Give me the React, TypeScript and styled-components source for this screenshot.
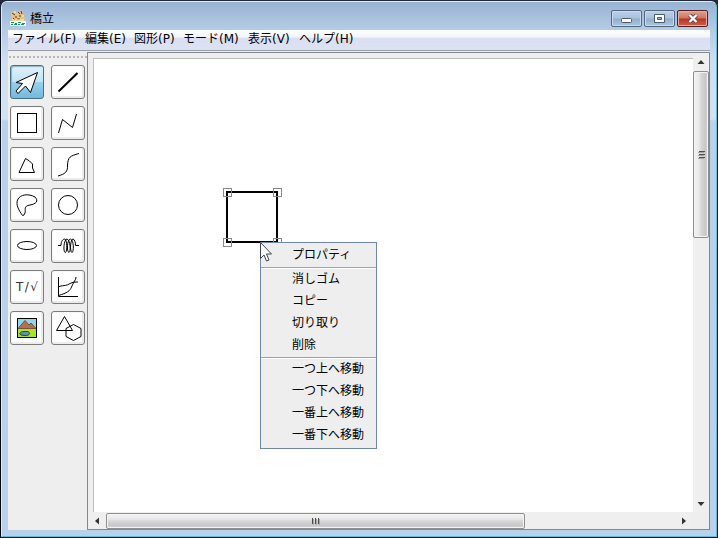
import React from "react";
import styled, { createGlobalStyle, css } from "styled-components";

const GlobalStyle = createGlobalStyle`
  *, *::before, *::after { box-sizing: border-box; }
  body { margin: 0; background: #05080c; overflow: hidden; }
  svg { display: block; }
`;

const Desktop = styled.div`
  width: 718px;
  height: 538px;
  padding: 1px;
  background: linear-gradient(180deg, #23283c 0, #0b1020 40px, #05080c 100%);
  font: 12px/22px "DejaVu Sans", "Noto Sans CJK JP", sans-serif;
  color: #000;
`;

const Window = styled.div`
  width: 716px;
  height: 536px;
  display: flex;
  flex-direction: column;
  padding: 0 6px 6px 6px;
  border: 1px solid;
  border-color: #e4edf6 #4cc6e0 #4cc6e0 #dfe9f4;
  border-radius: 6px 6px 0 0;
  background: linear-gradient(180deg, #98b4d3 0, #b3cbe5 28px, #cfdff0 60px, #d3e2f3 117px, #b9d1ea 119px, #b9d1ea 100%);
`;

const TitleBar = styled.div`
  height: 28px;
  flex: none;
  display: flex;
  align-items: flex-start;
  margin: 0 -6px;
  padding: 0 6px;
  border-radius: 5px 5px 0 0;
  background: linear-gradient(180deg, #98b3d2, #b4cde6);
`;

const AppIcon = styled.svg`
  margin: 8px 0 0 2px;
  flex: none;
`;

const Title = styled.div`
  flex: 1;
  margin: 6px 0 0 4px;
`;

const WindowButton = styled.button<{ $close?: boolean }>`
  width: 31px;
  height: 17px;
  margin: 8px 0 0 2px;
  padding: 0;
  display: grid;
  place-items: center;
  border: 1px solid ${p => (p.$close ? "#541e24" : "#53657f")};
  border-radius: 2px;
  background: ${p =>
    p.$close
      ? "linear-gradient(180deg, #dfa093 0, #cf7564 48%, #b93520 52%, #cf6249 100%)"
      : "linear-gradient(180deg, #bdd0e6 0, #a9c1dc 48%, #90adcd 52%, #a9c5e0 100%)"};
  box-shadow: inset 0 0 0 1px ${p => (p.$close ? "#e5aea5" : "#c9daed")};
`;

const ControlGroup = styled.div`
  display: flex;
  margin-right: 2px;
`;

const MenuBar = styled.nav`
  height: 21px;
  flex: none;
  display: flex;
  padding-left: 4px;
  line-height: 19px;
  border-bottom: 1px solid #9a9da6;
  background: linear-gradient(180deg, #fff 0, #f3f5fb 35%, #d9dff1 42%, #dde2f3 100%);
`;

const MenuItem = styled.span<{ $width: number }>`
  width: ${p => p.$width}px;
  white-space: nowrap;
`;

const Client = styled.div`
  flex: 1;
  min-height: 0;
  display: flex;
  padding-top: 1px;
  background: #eee;
`;

const ToolBar = styled.aside`
  width: 79px;
  flex: none;
  padding: 4px 0 0 1px;
`;

const Grip = styled.div`
  height: 3px;
  margin-bottom: 6px;
  background:
    radial-gradient(circle at 1px 1px, #b9b9b9 0 0.9px, transparent 1px) 0 0 / 4px 3px repeat-x;
`;

const ToolGrid = styled.div`
  display: grid;
  grid-template-columns: 34px 34px;
  grid-auto-rows: 34px;
  gap: 7px;
  padding-left: 1px;
`;

const ToolButton = styled.button<{ $active?: boolean }>`
  padding: 0;
  display: grid;
  place-items: center;
  border: 1px solid #7c7c7c;
  border-radius: 3px;
  background: #fff;
  box-shadow: inset -1px -1px 0 1px #ececec, inset 0 0 0 1px #f7f7f7;
  ${p =>
    p.$active &&
    css`
      border-color: #466f88;
      background: linear-gradient(180deg, #dff1fb 0, #c3e3f5 49%, #98d0ee 50%, #74b8dc 100%);
      box-shadow: inset 1px 1px 1px #8eb2c5;
    `}
`;

const ScrollPane = styled.div`
  flex: 1;
  display: grid;
  grid-template-columns: 1fr 16px;
  grid-template-rows: 1fr 16px;
  border: 1px solid #828790;
  background: #eee;
`;

const Viewport = styled.main`
  position: relative;
  margin: 5px 0 1px 5px;
  border: solid #bdbdbd;
  border-width: 1px 0 0 1px;
  background: #fff;
`;

const Shape = styled.svg`
  position: absolute;
  left: 126px;
  top: 126px;
`;

const Popup = styled.ul`
  position: absolute;
  left: 166px;
  top: 183px;
  width: 117px;
  height: 207px;
  margin: 0;
  padding: 2px 1px 1px;
  list-style: none;
  border: 1px solid #6f86ad;
  background: #eee;
`;

const PopupItem = styled.li`
  height: 22px;
  padding-left: 30px;
  line-height: 21px;
  white-space: nowrap;
`;

const Separator = styled.li`
  height: 2px;
  margin: 0 -1px;
  border-top: 1px solid #a0a3aa;
  background: #fff;
`;

const Pointer = styled.svg`
  position: absolute;
  left: 166px;
  top: 183px;
`;

const ScrollBar = styled.div<{ $vertical?: boolean }>`
  display: flex;
  flex-direction: ${p => (p.$vertical ? "column" : "row")};
  background: #efefef;
`;

const Arrow = styled.div<{ $size: number }>`
  flex: 0 0 ${p => p.$size}px;
  display: grid;
  place-items: center;
`;

const Thumb = styled.div<{ $vertical?: boolean; $length: number }>`
  flex: 0 0 ${p => p.$length}px;
  display: grid;
  place-items: center;
  border: 1px solid #8f8f8f;
  border-radius: 2px;
  box-shadow: inset 0 0 0 1px #f4f4f4;
  background: linear-gradient(${p => (p.$vertical ? "90deg" : "180deg")}, #f4f4f4 0, #e8e8e9 35%, #d6d6d8 52%, #c8c8cb 80%, #d4d4d6 100%);
`;

const Track = styled.div`
  flex: 1;
`;

const Glyph = ({ children }: { children: React.ReactNode }) => (
  <svg width="32" height="32" viewBox="0 0 32 32" fill="none" stroke="#000" strokeWidth="1">
    {children}
  </svg>
);

const tools: { name: string; art: React.ReactNode }[] = [
  { name: "select", art: <path d="M26.5 6.5 5 16.5 11.5 17.5 5 25 7 27.5 14.5 20 19.5 26.5Z" fill="#fff" strokeWidth="1" /> },
  { name: "line", art: <path d="M6.5 25.5 25.5 7" strokeWidth="2" /> },
  { name: "rectangle", art: <path d="M6.5 6.5h19v19h-19Z" shapeRendering="crispEdges" /> },
  { name: "polyline", art: <path d="M6.500 26 10.5 12.5 20.5 20.5 24.5 7" /> },
  { name: "polygon", art: <path d="M14.5 10.5 8 24.5H23.5L21.5 20V16L18.5 13Z" /> },
  { name: "curve", art: <path d="M6 28C13 26 16 24 15.5 17C16 9 18 8 27 5.5" /> },
  { name: "closed curve", art: <path d="M11.5 26.5C7 20 5 16 6.5 11C9 5 18 4.5 24 8C28 12 25 15 19 16C12 17 15 21 14 24Q13 27 11.5 26.5Z" /> },
  { name: "circle", art: <circle cx="16" cy="16" r="9.5" /> },
  { name: "ellipse", art: <ellipse cx="16" cy="15.5" rx="9.5" ry="4" /> },
  { name: "coil", art: <path d="M6 15.5H9C9 11 11 9 13 9C15 10 15.5 21 13.5 22.5C11 23 11.5 9.5 15 9C18.5 10 19 22 17 22.5C14.5 22 15 9 18.5 9C22 10 22 22 20 22.5C17.5 21 18.5 9 21 9Q23.5 10 23.5 15.5H27" /> },
  {
    name: "text",
    art: (
      <text x="5" y="20" fill="#333" stroke="none" fontSize="12" fontFamily='"DejaVu Sans", sans-serif' textLength="22">
        T/√
      </text>
    ),
  },
  { name: "graph", art: <path d="M6.5 6V25.5H26M6.5 24.5C15 22 18 20 19.5 16C21 12 24 9 24 6M7 15.5C12 14 15 15 18 12.5Q21 10.5 26 11" /> },
  {
    name: "image",
    art: (
      <>
        <path d="M6.5 6.5h19v19h-19Z" fill="#8fd5ed" />
        <path d="M7 16.5 14 8.5 18 13 20 11 25 16.5Z" fill="#b66f4b" stroke="#77513c" />
        <path d="M7 17h18v8H7Z" fill="#a8e51b" stroke="none" />
        <path d="M8.5 21.500Q10 19 14 19.500Q18.500 19 18.500 21.500Q18 24 13 23.500Q9 23.500 8.500 21.500Z" fill="#5d91ad" stroke="#26484b" />
        <path d="M6.5 6.5h19v19h-19Z" />
      </>
    ),
  },
  { name: "figures", art: <path d="M12.5 4.5 4.5 18.5H20.5ZM21.5 12.5 29 16.5V24.5L21.5 28.5 14 24.5V16.5Z" /> },
];

const menus: [string, number][] = [
  ["ファイル(F)", 73],
  ["編集(E)", 49],
  ["図形(P)", 49],
  ["モード(M)", 65],
  ["表示(V)", 51],
  ["ヘルプ(H)", 60],
];

const popupGroups = [
  ["プロパティ"],
  ["消しゴム", "コピー", "切り取り", "削除"],
  ["一つ上へ移動", "一つ下へ移動", "一番上へ移動", "一番下へ移動"],
];

const handles = [[3.5, 3.5], [53.5, 3.5], [3.5, 53.5], [53.5, 53.5]];

const Triangle = ({ turn }: { turn: number }) => (
  <svg width="8" height="8" viewBox="0 0 8 8">
    <path d="M0.5 6 4 2 7.5 6Z" fill="#333" transform={`rotate(${turn} 4 4)`} />
  </svg>
);

const Ridges = ({ turn }: { turn: number }) => (
  <svg width="9" height="9" viewBox="0 0 9 9" shapeRendering="crispEdges">
    <g transform={`rotate(${turn} 4.5 4.5)`}>
      <path d="M1.5 1v6M4.5 1v6M7.5 1v6" stroke="#4c4c4c" />
      <path d="M2.5 2v6M5.5 2v6M8.5 2v6" stroke="#a5a5a5" />
    </g>
  </svg>
);

export default function App() {
  return (
    <>
      <GlobalStyle />
      <Desktop>
        <Window>
          <TitleBar>
            <AppIcon width="16" height="16" viewBox="0 0 16 16">
              <path d="M1 2 4 1 6 3 10 1 12 0 13 4 15 8 13 11H2L1 7Z" fill="#e9c381" />
              <path d="M2 3 5 5M8 2 10 4M11 1 12 4M5 7h2M9 6h2M7 9h3M3 8l2 2" stroke="#493624" fill="none" />
              <path d="M2 10h12M4 2h2M12 6h2" stroke="#fff0c5" />
              <path d="M0 11h16v5H0Z" fill="#eefff4" />
              <path d="M1 12.5h3M5 13.5h2M8 12.5h3M12 13.5h3M1 14.5h2M4 14.5h3M8 14.5h2M11 14.5h3" stroke="#109d5d" strokeWidth="1.2" />
            </AppIcon>
            <Title>橋立</Title>
            <ControlGroup>
              <WindowButton aria-label="minimize">
                <svg width="12" height="11" viewBox="0 0 12 11"><rect x="0.5" y="5.5" width="10" height="4" rx="1" fill="#fff" stroke="#4c5a6c" /></svg>
              </WindowButton>
              <WindowButton aria-label="maximize">
                <svg width="11" height="11" viewBox="0 0 11 11"><path fillRule="evenodd" d="M.5 1.5h10v8H.5ZM3.5 4.5v2h4v-2Z" fill="#fff" stroke="#4c5a6c" /></svg>
              </WindowButton>
              <WindowButton $close aria-label="close">
                <svg width="12" height="11" viewBox="0 0 12 11"><path d="m2.5 2 7 7m0-7-7 7" stroke="#62494b" strokeWidth="4" /><path d="m2.5 2 7 7m0-7-7 7" stroke="#fff" strokeWidth="2.3" /></svg>
              </WindowButton>
            </ControlGroup>
          </TitleBar>
          <MenuBar>
            {menus.map(([label, width]) => <MenuItem key={label} $width={width}>{label}</MenuItem>)}
          </MenuBar>
          <Client>
            <ToolBar>
              <Grip />
              <ToolGrid>
                {tools.map((tool, index) => (
                  <ToolButton key={tool.name} aria-label={tool.name} $active={index === 0}>
                    <Glyph>{tool.art}</Glyph>
                  </ToolButton>
                ))}
              </ToolGrid>
            </ToolBar>
            <ScrollPane>
              <Viewport>
                <Shape width="64" height="64" viewBox="0 0 64 64" fill="none" shapeRendering="crispEdges">
                  <rect x="7" y="7" width="50" height="50" stroke="#000" strokeWidth="2" />
                  {handles.map(([x, y]) => <rect key={`${x}-${y}`} x={x} y={y} width="8" height="8" stroke="#888" />)}
                </Shape>
                <Popup>
                  {popupGroups.map((group, index) => (
                    <React.Fragment key={group[0]}>
                      {index > 0 && <Separator />}
                      {group.map(label => <PopupItem key={label}>{label}</PopupItem>)}
                    </React.Fragment>
                  ))}
                </Popup>
                <Pointer width="14" height="21" viewBox="0 0 14 21">
                  <path d="M.5.5V16.5L4 13 6.5 19 9 18 6.5 12H11.5Z" fill="#fff" stroke="#3c4456" />
                </Pointer>
              </Viewport>
              <ScrollBar $vertical>
                <Arrow $size={18}><Triangle turn={0} /></Arrow>
                <Thumb $vertical $length={167}><Ridges turn={90} /></Thumb>
                <Track />
                <Arrow $size={18}><Triangle turn={180} /></Arrow>
              </ScrollBar>
              <ScrollBar>
                <Arrow $size={18}><Triangle turn={-90} /></Arrow>
                <Thumb $length={419}><Ridges turn={0} /></Thumb>
                <Track />
                <Arrow $size={18}><Triangle turn={90} /></Arrow>
              </ScrollBar>
            </ScrollPane>
          </Client>
        </Window>
      </Desktop>
    </>
  );
}
